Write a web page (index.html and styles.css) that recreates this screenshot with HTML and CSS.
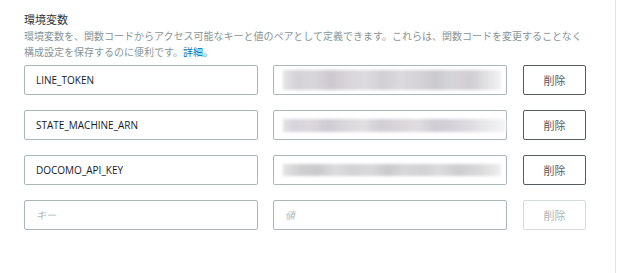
FILE: index.html
```html
<!DOCTYPE html>
<html lang="ja">
<head>
    <meta charset="UTF-8">
    <meta name="viewport" content="width=device-width, initial-scale=1.0">
    <title>環境変数</title>
    <link rel="stylesheet" href="styles.css">
</head>
<body>
    <div class="panel">
        <h2 class="title">環境変数</h2>
        <p class="desc">環境変数を、関数コードからアクセス可能なキーと値のペアとして定義できます。これらは、関数コードを変更することなく<br>構成設定を保存するのに便利です。<a href="#">詳細。</a></p>

        <div class="rows">
            <div class="row">
                <input class="key" type="text" value="LINE_TOKEN">
                <div class="field"><span class="blur blur-a"></span></div>
                <button class="del">削除</button>
            </div>
            <div class="row">
                <input class="key" type="text" value="STATE_MACHINE_ARN">
                <div class="field"><span class="blur blur-b"></span></div>
                <button class="del">削除</button>
            </div>
            <div class="row">
                <input class="key" type="text" value="DOCOMO_API_KEY">
                <div class="field"><span class="blur blur-c"></span></div>
                <button class="del">削除</button>
            </div>
            <div class="row">
                <input class="key" type="text" placeholder="キー">
                <input class="key" type="text" placeholder="値">
                <button class="del" disabled>削除</button>
            </div>
        </div>
    </div>
</body>
</html>
```

FILE: styles.css
```css
body {
    margin: 0;
    background: #fff;
    font-family: "Open Sans", "Noto Sans CJK JP", sans-serif;
}
.panel {
    width: 616px;
    height: 273px;
    box-sizing: border-box;
    border-right: 1px solid #e4e4e4;
    padding: 12px 0 0 24px;
}
.title {
    margin: 0;
    font-size: 11px;
    line-height: 16px;
    font-weight: normal;
    color: #333;
}
.desc {
    margin: 0;
    font-size: 10px;
    line-height: 16px;
    color: #879596;
    white-space: nowrap;
}
.desc a {
    color: #0073bb;
    text-decoration: none;
}
.rows {
    margin-top: 5px;
    display: flex;
    flex-direction: column;
    gap: 15px;
}
.row {
    display: flex;
    gap: 15px;
}
.key, .field {
    width: 234px;
    height: 30px;
    box-sizing: border-box;
    border: 1px solid #aab7b8;
    border-radius: 2px;
    padding: 0 11px;
    font-family: "Open Sans", "Noto Sans CJK JP", sans-serif;
    font-size: 10px;
    color: #16191f;
    background: #fff;
    outline: none;
}
.key::placeholder {
    color: #aab7b8;
    font-style: italic;
}
.field {
    display: flex;
    align-items: center;
    padding: 0 0 0 9px;
}
.blur {
    display: block;
    filter: blur(1.5px);
}
.blur-a {
    width: 218px;
    height: 20px;
    background: linear-gradient(90deg, #e6e5e8 0, #d4d1d6 6%, #d9d6da 14%, #cdc8cf 22%, #d8d5d9 30%, #dedbe0 38%, #d2cfd4 46%, #dcd9dd 54%, #d4d2d6 62%, #cbcbcf 70%, #d6d4d8 78%, #cfcdd2 86%, #e3e2e5 94%, #f2f2f3 100%);
}
.blur-b {
    width: 230px;
    height: 13px;
    background: linear-gradient(90deg, #e3e2e6 0, #d6d3da 5%, #dcd9de 12%, #cfcbd2 20%, #d9d6db 28%, #e2dfe3 36%, #d1ced4 44%, #d9d5d9 52%, #e0dde1 60%, #cfccd3 68%, #d5d3da 76%, #dedce0 84%, #eaeaec 92%, #f6f6f7 100%);
}
.blur-c {
    width: 218px;
    height: 12px;
    background: linear-gradient(90deg, #e4e4e5 0, #cfcfd1 8%, #c9c9cb 16%, #dcdcde 24%, #d2d2d4 32%, #d9d9db 40%, #cacacc 48%, #d7d7d9 56%, #d1d1d3 64%, #dbdbdd 72%, #cdcdcf 80%, #d8d8da 90%, #eeeeef 100%);
}
.del {
    width: 63px;
    height: 30px;
    margin-left: 1px;
    border: 1px solid #545b64;
    border-radius: 2px;
    background: #fff;
    color: #545b64;
    font-family: "Noto Sans CJK JP", sans-serif;
    font-size: 11px;
    padding: 0;
}
.del:disabled {
    border-color: #d5dbdb;
    color: #aab7b8;
}
```
